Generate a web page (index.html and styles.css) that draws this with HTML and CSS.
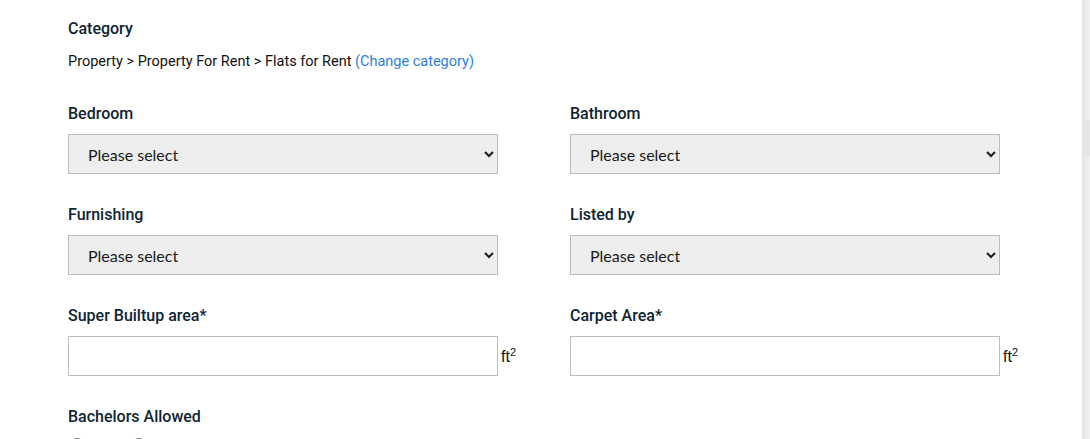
FILE: index.html
```html
<!DOCTYPE html>
<html lang="en">
<head>
<meta charset="utf-8">
<title>Post ad</title>
<link rel="stylesheet" href="styles.css">
</head>
<body>
<div class="page">
  <div class="section-label">Category</div>
  <div class="breadcrumb">Property &gt; Property For Rent &gt; Flats for Rent <a class="change" href="#">(Change category)</a></div>

  <div class="grid">
    <div class="field">
      <label class="label">Bedroom</label>
      <select class="select"><option>Please select</option></select>
    </div>
    <div class="field">
      <label class="label">Bathroom</label>
      <select class="select"><option>Please select</option></select>
    </div>
    <div class="field">
      <label class="label">Furnishing</label>
      <select class="select"><option>Please select</option></select>
    </div>
    <div class="field">
      <label class="label">Listed by</label>
      <select class="select"><option>Please select</option></select>
    </div>
    <div class="field">
      <label class="label">Super Builtup area*</label>
      <div class="unit-row"><input class="input" type="text"><span class="unit">ft<sup>2</sup></span></div>
    </div>
    <div class="field">
      <label class="label">Carpet Area*</label>
      <div class="unit-row"><input class="input" type="text"><span class="unit">ft<sup>2</sup></span></div>
    </div>
    <div class="field">
      <label class="label">Bachelors Allowed</label>
      <div class="radios">
        <span class="radio"><input type="radio" name="bach" aria-label="Yes"></span>
        <span class="radio"><input type="radio" name="bach" aria-label="No"></span>
      </div>
    </div>
  </div>
</div>
<div class="scrollbar"><div class="thumb"></div></div>
</body>
</html>
```
FILE: styles.css
```css
html, body {
  margin: 0;
  padding: 0;
  background: #ffffff;
  overflow: hidden;
}
.page {
  padding: 18px 0 0 68px;
}
.section-label,
.label {
  display: block;
  font-family: Roboto, "Liberation Sans", sans-serif;
  font-size: 16px;
  font-weight: 500;
  line-height: 22px;
  color: #0e2433;
}
.breadcrumb {
  margin-top: 12px;
  font-family: Roboto, "Liberation Sans", sans-serif;
  font-size: 14.5px;
  line-height: 20px;
  color: #111111;
}
.change {
  color: #2f7fe0;
  text-decoration: none;
}
.grid {
  margin-top: 30px;
  display: grid;
  grid-template-columns: 502px 502px;
  row-gap: 29px;
}
.field .label {
  padding-top: 1px;
  margin-bottom: 9px;
}
.select {
  display: block;
  width: 430px;
  height: 40px;
  box-sizing: border-box;
  background: #eeeeee;
  border: 1px solid #bdbdbd;
  border-radius: 0;
  padding: 0 12px 0 15px;
  font-family: Lato, "Noto Sans", sans-serif;
  font-size: 16px;
  color: #1a1a1a;
}
.unit-row {
  display: flex;
  align-items: center;
}
.input {
  width: 430px;
  height: 40px;
  box-sizing: border-box;
  border: 1px solid #bdbdbd;
  background: #ffffff;
  margin: 0;
  padding: 0 10px;
}
.unit {
  margin-left: 3px;
  font-family: "Liberation Sans", sans-serif;
  font-size: 16px;
  color: #111111;
}
.unit sup {
  font-size: 11px;
}
.radios {
  display: flex;
  padding-top: 1px;
}
.radio {
  display: block;
  width: 62px;
}
.radio input {
  display: block;
  width: 16px;
  height: 16px;
  margin: 0 0 0 1px;
}
.scrollbar {
  position: fixed;
  top: 0;
  right: 0;
  width: 7px;
  height: 100%;
  background: linear-gradient(to right, #e4e4e4, #f1f1f1);
  border-left: 1px solid #e2e2e2;
}
.thumb {
  margin-top: 120px;
  height: 36px;
  background: #e6e6e6;
}
```
